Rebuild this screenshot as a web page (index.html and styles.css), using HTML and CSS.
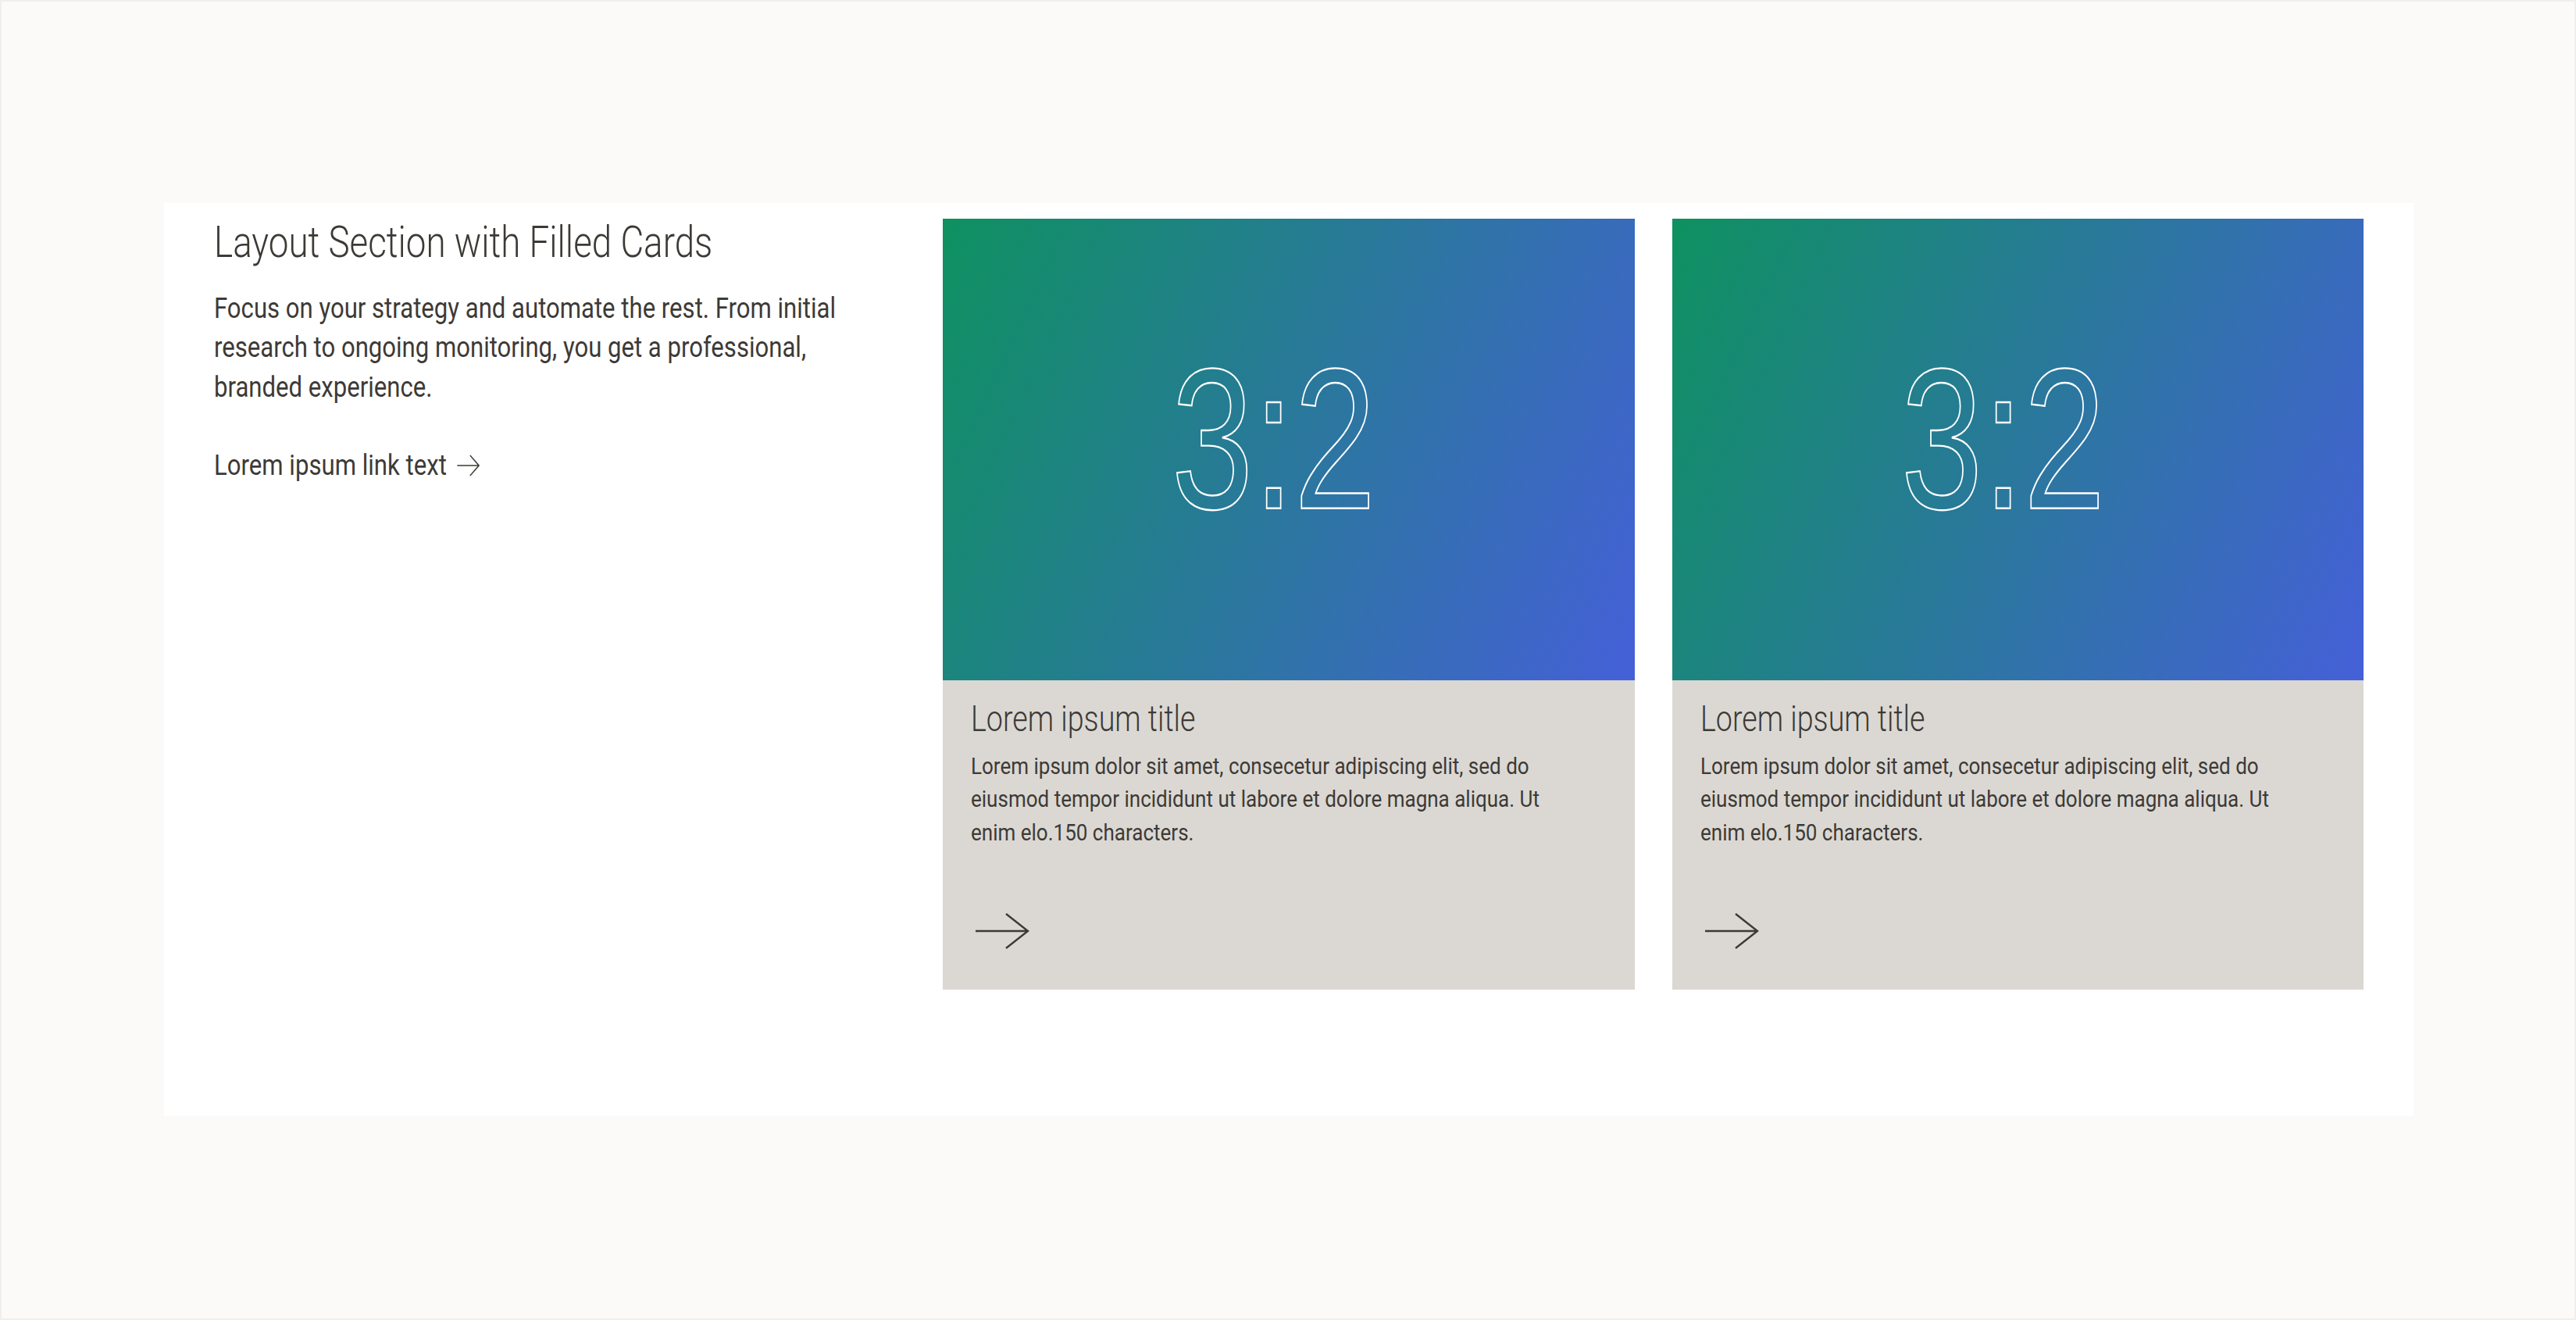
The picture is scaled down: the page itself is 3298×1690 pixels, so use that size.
FILE: index.html
```
<!DOCTYPE html>
<html lang="en">
<head>
<meta charset="utf-8">
<title>Layout Section with Filled Cards</title>
<link rel="stylesheet" href="styles.css">
</head>
<body>
<div class="page">
  <section class="panel">
    <div class="intro">
      <h2 class="intro-title">Layout Section with Filled Cards</h2>
      <p class="intro-text">Focus on your strategy and automate the rest. From initial research to ongoing monitoring, you get a professional, branded experience.</p>
      <a class="intro-link" href="#">Lorem ipsum link text <svg class="link-arrow" viewBox="0 0 34 28" width="34" height="28" aria-hidden="true"><path d="M1 14H33M20 1L33 14L20 27"/></svg></a>
    </div>

    <article class="card">
      <div class="card-media">
        <svg class="ratio" viewBox="0 0 886 591" preserveAspectRatio="xMidYMid meet"><text x="424" y="371" text-anchor="middle" textLength="262" lengthAdjust="spacingAndGlyphs">3:2</text></svg>
      </div>
      <div class="card-body">
        <h3 class="card-title">Lorem ipsum title</h3>
        <p class="card-text">Lorem ipsum dolor sit amet, consecetur adipiscing elit, sed do eiusmod tempor incididunt ut labore et dolore magna aliqua. Ut enim elo.150 characters.</p>
        <svg class="card-arrow" viewBox="0 0 80 50" width="80" height="50" aria-hidden="true"><path d="M7 24H74M46 2L74 24L46 46"/></svg>
      </div>
    </article>

    <article class="card">
      <div class="card-media">
        <svg class="ratio" viewBox="0 0 886 591" preserveAspectRatio="xMidYMid meet"><text x="424" y="371" text-anchor="middle" textLength="262" lengthAdjust="spacingAndGlyphs">3:2</text></svg>
      </div>
      <div class="card-body">
        <h3 class="card-title">Lorem ipsum title</h3>
        <p class="card-text">Lorem ipsum dolor sit amet, consecetur adipiscing elit, sed do eiusmod tempor incididunt ut labore et dolore magna aliqua. Ut enim elo.150 characters.</p>
        <svg class="card-arrow" viewBox="0 0 80 50" width="80" height="50" aria-hidden="true"><path d="M7 24H74M46 2L74 24L46 46"/></svg>
      </div>
    </article>
  </section>
</div>
</body>
</html>
```

FILE: styles.css
```
html, body {
  margin: 0;
  padding: 0;
}

body {
  font-family: Roboto, "Liberation Sans", Arial, sans-serif;
  color: #3d3a36;
  background: #fbfaf8;
}

.page {
  box-sizing: border-box;
  width: 3298px;
  height: 1690px;
  border: 2px solid #f0efed;
  background: #fbfaf8;
  padding: 258px 0 0 208px;
}

.panel {
  box-sizing: border-box;
  width: 2880px;
  background: #ffffff;
  padding: 20px 64px 162px;
  display: grid;
  grid-template-columns: repeat(3, minmax(0, 1fr));
  column-gap: 48px;
  align-items: start;
}

.intro {
  min-width: 0;
}

/* condensed look: the reference face is a narrow grotesk */
.intro-title,
.intro-text,
.intro-link,
.card-title,
.card-text {
  transform-origin: 0 0;
}

.intro-title {
  margin: 0;
  font-size: 55px;
  line-height: 1.1;
  font-weight: 300;
  white-space: nowrap;
  transform: scaleX(0.832);
}

.intro-text {
  margin: 29px 0 0;
  width: 930px;
  font-size: 36px;
  line-height: 50.5px;
  font-weight: 400;
  transform: scaleX(0.864);
}

.intro-link {
  display: inline-block;
  margin-top: 50px;
  font-size: 36px;
  line-height: 50.5px;
  font-weight: 400;
  white-space: nowrap;
  color: #3d3a36;
  text-decoration: none;
  transform: scaleX(0.865);
}

.link-arrow {
  vertical-align: middle;
  margin-left: 6px;
  margin-top: -4px;
  fill: none;
  stroke: #3d3a36;
  stroke-width: 1.7;
}

.card {
  display: flex;
  flex-direction: column;
  min-width: 0;
}

.card-media {
  aspect-ratio: 3 / 2;
  background: linear-gradient(115deg, #0e9160 0%, #2a789c 50%, #4560d8 100%);
}

.ratio {
  display: block;
  width: 100%;
  height: 100%;
}

.ratio text {
  font-family: "Liberation Sans", Arial, sans-serif;
  font-size: 257px;
  font-weight: 400;
  fill: none;
  stroke: #ffffff;
  stroke-width: 2.4;
}

.card-body {
  background: #dbd8d3;
  padding: 22px 36px 49px;
  display: flex;
  flex-direction: column;
  align-items: flex-start;
  overflow: hidden;
}

.card-title {
  margin: 0;
  font-size: 46px;
  line-height: 1.2;
  font-weight: 300;
  white-space: nowrap;
  transform: scaleX(0.818);
}

.card-text {
  margin: 12px 0 0;
  width: 880px;
  flex: none;
  font-size: 30px;
  line-height: 42.5px;
  font-weight: 400;
  transform: scaleX(0.867);
}

.card-arrow {
  display: block;
  margin-top: 81px;
  margin-left: -1px;
  fill: none;
  stroke: #3d3a36;
  stroke-width: 2.4;
}
```
